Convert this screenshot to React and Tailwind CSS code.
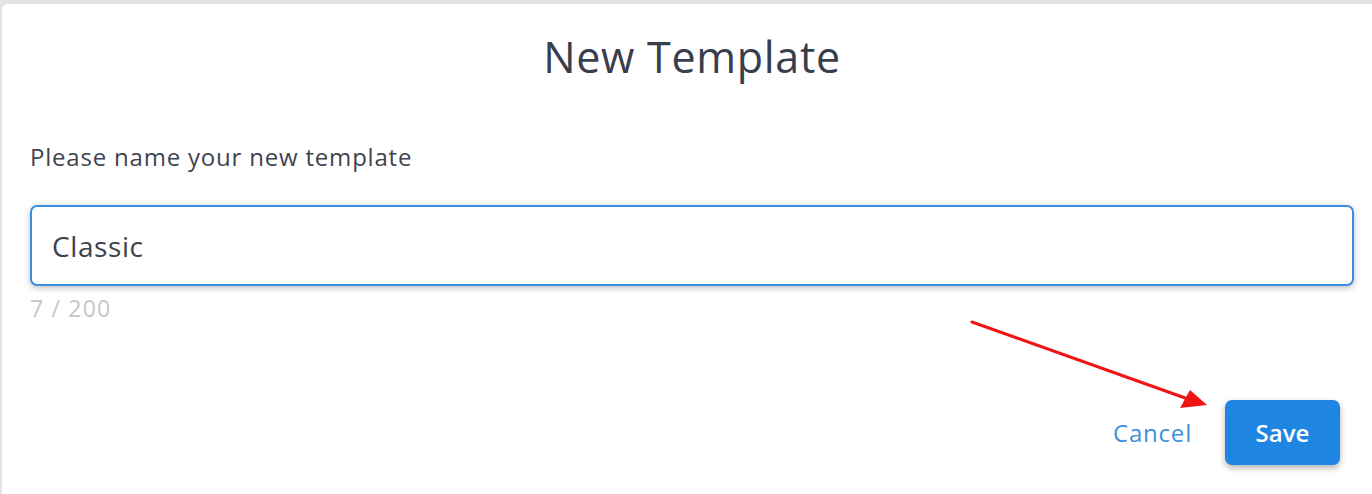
export default function App() {
  return (
    <div className="w-[1372px] h-[494px] bg-[#e4e4e4] pt-[4px] pl-[2px] overflow-hidden font-['Open_Sans',sans-serif]">
      <div className="relative bg-white h-[500px] rounded-tl-[6px] pl-[28px] pr-[18px] pt-[28px]">
        <h2 className="text-center text-[43px] leading-[50px] text-[#383e4b] tracking-[0.7px]">New Template</h2>

        <p className="mt-[59px] text-[24px] leading-[32px] text-[#3f4450] tracking-[0.8px]">Please name your new template</p>

        <div className="mt-[32px] h-[81px] rounded-[7px] border-2 border-[#3b8fe0] bg-white shadow-[0_2px_6px_rgba(0,0,0,0.25)] flex items-center px-[20px]">
          <span className="text-[28px] text-[#3d424d] tracking-[0.6px]">Classic</span>
        </div>
        <div className="mt-[7px] text-[23px] leading-[30px] text-[#c3c7ce] tracking-[1.2px]">7 / 200</div>

        <div className="mt-[77px] flex items-center justify-end gap-[33px] pr-[14px]">
          <button className="text-[24px] text-[#3f8fdd] tracking-[0.8px]">Cancel</button>
          <button className="w-[115px] h-[65px] rounded-[7px] bg-[#1e86e2] text-white text-[24px] font-semibold shadow-[0_3px_6px_rgba(0,0,0,0.3)]">Save</button>
        </div>

        <svg className="absolute left-0 top-0 pointer-events-none" width="1372" height="494" viewBox="0 4 1372 494">
          <line x1="970" y1="322" x2="1186" y2="399" stroke="#f01414" strokeWidth="3" strokeLinecap="round" />
          <polygon points="1205,405 1178,408 1188,390" fill="#f01414" />
        </svg>
      </div>
    </div>
  );
}
